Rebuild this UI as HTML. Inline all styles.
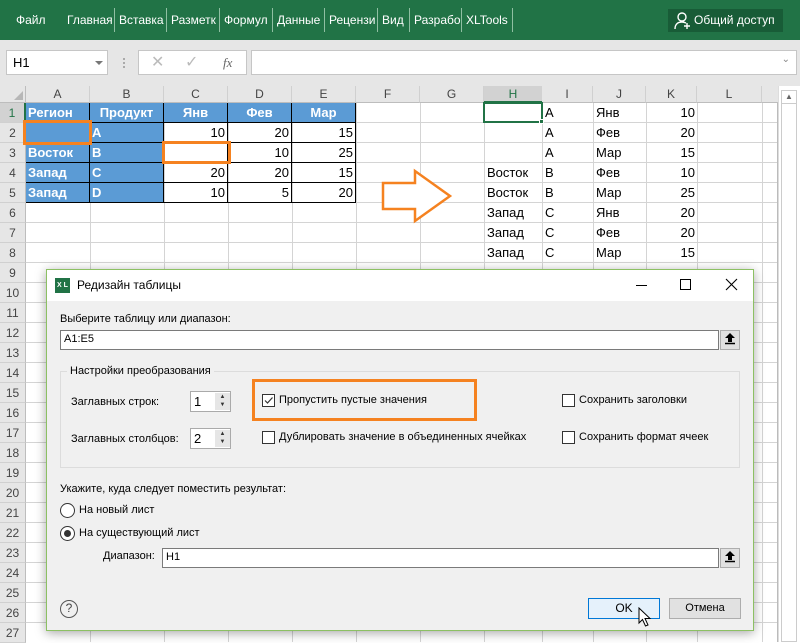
<!DOCTYPE html>
<html><head><meta charset="utf-8">
<style>
*{margin:0;padding:0;box-sizing:border-box}
body{width:800px;height:642px;overflow:hidden;position:relative;background:#fff;font-family:"Liberation Sans","DejaVu Sans",sans-serif}
.a{position:absolute}
.rib{left:0;top:0;width:800px;height:40px;background:#217346;color:#fff;font-size:12px}
.tab{top:13px}
.sep{top:8px;width:1px;height:24px;background:#8fbfa2}
.fb{left:0;top:40px;width:800px;height:46px;background:#e6e6e6}
.box{background:#fff;border:1px solid #c6c6c6}
.grid{left:26px;top:103px;width:751px;height:539px;background-image:repeating-linear-gradient(to bottom,transparent 0,transparent 19px,#d4d4d4 19px,#d4d4d4 20px)}
.vl{top:86px;width:1px;height:556px;background:#d4d4d4}
.hdr{top:86px;height:17px;background:#e6e6e6;border-bottom:1px solid #bdbdbd;font-size:12px;color:#444;text-align:center;line-height:17px}
.rh{left:0;width:26px;height:20px;background:#e6e6e6;border-right:1px solid #bdbdbd;border-bottom:1px solid #d0d0d0;font-size:12px;color:#444;text-align:center;line-height:20px}
.c{height:20px;font-size:13px;line-height:20px;padding:0 2px;white-space:nowrap}
.bl{background:#5b9bd5;color:#fff;font-weight:bold}
.bd{border-right:1px solid #000;border-bottom:1px solid #000}
.r{text-align:right}
.dlg{left:46px;top:269px;width:708px;height:362px;background:#f0f0f0;border:1px solid #8cc063;box-shadow:0 2px 10px rgba(0,0,0,.35);font-size:11px;color:#000}
.t{font-size:11px;white-space:nowrap}
.inp{background:#fff;border:1px solid #7a7a7a;font-size:11px;line-height:17px;padding-left:3px}
.ub{width:20px;height:20px;background:#e1e1e1;border:1px solid #adadad;text-align:center}
.cb{width:13px;height:13px;background:#fff;border:1px solid #333}
.rd{width:15px;height:15px;border-radius:50%;background:#fff;border:1px solid #333}
</style></head><body>
<div class="a rib">
<div class="a tab" style="left:16px">Файл</div>
<div class="a tab" style="left:67px">Главная</div><div class="a sep" style="left:114px"></div>
<div class="a tab" style="left:119px">Вставка</div><div class="a sep" style="left:166px"></div>
<div class="a tab" style="left:171px">Разметк</div><div class="a sep" style="left:219px"></div>
<div class="a tab" style="left:224px">Формул</div><div class="a sep" style="left:272px"></div>
<div class="a tab" style="left:277px">Данные</div><div class="a sep" style="left:324px"></div>
<div class="a tab" style="left:329px">Рецензи</div><div class="a sep" style="left:377px"></div>
<div class="a tab" style="left:382px">Вид</div><div class="a sep" style="left:409px"></div>
<div class="a tab" style="left:414px">Разрабо</div><div class="a sep" style="left:461px"></div>
<div class="a tab" style="left:466px">XLTools</div><div class="a sep" style="left:512px"></div>
<div class="a" style="left:668px;top:9px;width:115px;height:23px;background:#185c37"></div>
<svg class="a" style="left:674px;top:11px" width="18" height="20" viewBox="0 0 18 20"><circle cx="8" cy="6" r="4" fill="none" stroke="#fff" stroke-width="1.4"/><path d="M1 18c0-5 3-7 7-7 2 0 3 .5 4 1" fill="none" stroke="#fff" stroke-width="1.4"/><path d="M13 12v6M10 15h6" stroke="#fff" stroke-width="1.4"/></svg>
<div class="a" style="left:694px;top:13px;font-size:12px">Общий доступ</div>
</div>
<div class="a fb">
<div class="a box" style="left:6px;top:10px;width:102px;height:25px;font-size:13px;line-height:23px;padding-left:6px">H1<span class="a" style="left:88px;top:10px;border:4px solid transparent;border-top:4px solid #777"></span></div>
<div class="a" style="left:123px;top:18px;width:2px;height:2px;background:#aaa;box-shadow:0 4px #aaa,0 8px #aaa"></div>
<div class="a box" style="left:138px;top:10px;width:109px;height:25px;color:#bbb;font-size:16px;line-height:23px"><span class="a" style="left:12px">✕</span><span class="a" style="left:46px">✓</span><span class="a" style="left:84px;color:#666;font-family:'Liberation Serif',serif;font-style:italic;font-size:13px">fx</span></div>
<div class="a box" style="left:251px;top:10px;width:546px;height:25px"><span class="a" style="right:6px;top:3px;color:#888;font-size:10px">⌄</span></div>
</div>
<div class="a grid"></div>
<div class="a vl" style="left:90px"></div><div class="a vl" style="left:164px"></div><div class="a vl" style="left:228px"></div><div class="a vl" style="left:292px"></div><div class="a vl" style="left:356px"></div><div class="a vl" style="left:420px"></div><div class="a vl" style="left:484px"></div><div class="a vl" style="left:542px"></div><div class="a vl" style="left:593px"></div><div class="a vl" style="left:646px"></div><div class="a vl" style="left:697px"></div><div class="a vl" style="left:762px"></div><div class="a vl" style="left:777px;background:#bbb"></div>
<div class="a" style="left:778px;top:86px;width:22px;height:556px;background:#fff;border-left:1px solid #ddd"></div>
<div class="a" style="left:781px;top:90px;width:16px;height:14px;background:#fff;border:1px solid #ccc;font-size:8px;text-align:center;color:#666;line-height:12px">▲</div>
<div class="a" style="left:781px;top:104px;width:16px;height:538px;border:1px solid #ccc;border-top:none"></div>
<div class="a hdr" style="left:0;width:26px;border-right:1px solid #bdbdbd"><span class="a" style="right:2px;bottom:2px;border-left:9px solid transparent;border-bottom:9px solid #b7b7b7"></span></div>
<div class="a hdr" style="left:26px;width:64px;border-right:1px solid #d0d0d0">A</div>
<div class="a hdr" style="left:90px;width:74px;border-right:1px solid #d0d0d0">B</div>
<div class="a hdr" style="left:164px;width:64px;border-right:1px solid #d0d0d0">C</div>
<div class="a hdr" style="left:228px;width:64px;border-right:1px solid #d0d0d0">D</div>
<div class="a hdr" style="left:292px;width:64px;border-right:1px solid #d0d0d0">E</div>
<div class="a hdr" style="left:356px;width:64px;border-right:1px solid #d0d0d0">F</div>
<div class="a hdr" style="left:420px;width:64px;border-right:1px solid #d0d0d0">G</div>
<div class="a hdr" style="left:484px;width:58px;background:#d2d2d2;color:#217346;border-bottom:2px solid #217346">H</div>
<div class="a hdr" style="left:542px;width:51px;border-right:1px solid #d0d0d0">I</div>
<div class="a hdr" style="left:593px;width:53px;border-right:1px solid #d0d0d0">J</div>
<div class="a hdr" style="left:646px;width:51px;border-right:1px solid #d0d0d0">K</div>
<div class="a hdr" style="left:697px;width:65px;border-right:1px solid #d0d0d0">L</div>
<div class="a hdr" style="left:762px;width:16px"></div>
<div class="a rh" style="top:103px;color:#217346;border-right:2px solid #217346;background:#d2d2d2">1</div>
<div class="a rh" style="top:123px">2</div><div class="a rh" style="top:143px">3</div><div class="a rh" style="top:163px">4</div><div class="a rh" style="top:183px">5</div><div class="a rh" style="top:203px">6</div><div class="a rh" style="top:223px">7</div><div class="a rh" style="top:243px">8</div><div class="a rh" style="top:263px">9</div><div class="a rh" style="top:283px">10</div><div class="a rh" style="top:303px">11</div><div class="a rh" style="top:323px">12</div><div class="a rh" style="top:343px">13</div><div class="a rh" style="top:363px">14</div><div class="a rh" style="top:383px">15</div><div class="a rh" style="top:403px">16</div><div class="a rh" style="top:423px">17</div><div class="a rh" style="top:443px">18</div><div class="a rh" style="top:463px">19</div><div class="a rh" style="top:483px">20</div><div class="a rh" style="top:503px">21</div><div class="a rh" style="top:523px">22</div><div class="a rh" style="top:543px">23</div><div class="a rh" style="top:563px">24</div><div class="a rh" style="top:583px">25</div><div class="a rh" style="top:603px">26</div><div class="a rh" style="top:623px">27</div>
<div class="a c bl bd" style="left:26px;top:103px;width:64px">Регион</div>
<div class="a c bl bd" style="left:90px;top:103px;width:74px;text-align:center">Продукт</div>
<div class="a c bl bd" style="left:164px;top:103px;width:64px;text-align:center">Янв</div>
<div class="a c bl bd" style="left:228px;top:103px;width:64px;text-align:center">Фев</div>
<div class="a c bl bd" style="left:292px;top:103px;width:64px;text-align:center">Мар</div>
<div class="a c bl bd" style="left:26px;top:123px;width:64px"></div><div class="a c bl bd" style="left:90px;top:123px;width:74px">A</div>
<div class="a c bl bd" style="left:26px;top:143px;width:64px">Восток</div><div class="a c bl bd" style="left:90px;top:143px;width:74px">B</div>
<div class="a c bl bd" style="left:26px;top:163px;width:64px">Запад</div><div class="a c bl bd" style="left:90px;top:163px;width:74px">C</div>
<div class="a c bl bd" style="left:26px;top:183px;width:64px">Запад</div><div class="a c bl bd" style="left:90px;top:183px;width:74px">D</div>
<div class="a c bd r" style="left:164px;top:123px;width:64px">10</div><div class="a c bd r" style="left:228px;top:123px;width:64px">20</div><div class="a c bd r" style="left:292px;top:123px;width:64px">15</div>
<div class="a c bd r" style="left:164px;top:143px;width:64px"></div><div class="a c bd r" style="left:228px;top:143px;width:64px">10</div><div class="a c bd r" style="left:292px;top:143px;width:64px">25</div>
<div class="a c bd r" style="left:164px;top:163px;width:64px">20</div><div class="a c bd r" style="left:228px;top:163px;width:64px">20</div><div class="a c bd r" style="left:292px;top:163px;width:64px">15</div>
<div class="a c bd r" style="left:164px;top:183px;width:64px">10</div><div class="a c bd r" style="left:228px;top:183px;width:64px">5</div><div class="a c bd r" style="left:292px;top:183px;width:64px">20</div>
<div class="a" style="left:23px;top:120px;width:69px;height:25px;border:3px solid #f58220"></div>
<div class="a" style="left:162px;top:141px;width:69px;height:23px;border:3px solid #f58220"></div>
<svg class="a" style="left:380px;top:168px" width="75" height="58"><path d="M3 15H35V3L70 28L35 53V41H3Z" fill="#fff" stroke="#f58220" stroke-width="2.5"/></svg>
<div class="a" style="left:483px;top:102px;width:60px;height:21px;border:2px solid #217346"></div>
<div class="a" style="left:539px;top:119px;width:5px;height:5px;background:#217346;border:1px solid #fff"></div>
<div class="a c" style="left:543px;top:103px">A</div><div class="a c" style="left:594px;top:103px">Янв</div><div class="a c r" style="left:646px;top:103px;width:51px">10</div>
<div class="a c" style="left:543px;top:123px">A</div><div class="a c" style="left:594px;top:123px">Фев</div><div class="a c r" style="left:646px;top:123px;width:51px">20</div>
<div class="a c" style="left:543px;top:143px">A</div><div class="a c" style="left:594px;top:143px">Мар</div><div class="a c r" style="left:646px;top:143px;width:51px">15</div>
<div class="a c" style="left:485px;top:163px">Восток</div><div class="a c" style="left:543px;top:163px">B</div><div class="a c" style="left:594px;top:163px">Фев</div><div class="a c r" style="left:646px;top:163px;width:51px">10</div>
<div class="a c" style="left:485px;top:183px">Восток</div><div class="a c" style="left:543px;top:183px">B</div><div class="a c" style="left:594px;top:183px">Мар</div><div class="a c r" style="left:646px;top:183px;width:51px">25</div>
<div class="a c" style="left:485px;top:203px">Запад</div><div class="a c" style="left:543px;top:203px">C</div><div class="a c" style="left:594px;top:203px">Янв</div><div class="a c r" style="left:646px;top:203px;width:51px">20</div>
<div class="a c" style="left:485px;top:223px">Запад</div><div class="a c" style="left:543px;top:223px">C</div><div class="a c" style="left:594px;top:223px">Фев</div><div class="a c r" style="left:646px;top:223px;width:51px">20</div>
<div class="a c" style="left:485px;top:243px">Запад</div><div class="a c" style="left:543px;top:243px">C</div><div class="a c" style="left:594px;top:243px">Мар</div><div class="a c r" style="left:646px;top:243px;width:51px">15</div>
<div class="a dlg">
<div class="a" style="left:0;top:0;width:706px;height:31px;background:#fff"></div>
<div class="a" style="left:8px;top:8px;width:15px;height:15px;background:#217346;color:#fff;font-size:7px;line-height:15px;text-align:center;font-weight:bold">X L</div>
<div class="a t" style="left:30px;top:8px;font-size:12px">Редизайн таблицы</div>
<div class="a" style="left:589px;top:15px;width:11px;height:1px;background:#000"></div>
<div class="a" style="left:633px;top:9px;width:11px;height:11px;border:1px solid #000"></div>
<svg class="a" style="left:678px;top:8px" width="13" height="13"><path d="M1 1L12 12M12 1L1 12" stroke="#000" stroke-width="1.1"/></svg>
<div class="a t" style="left:13px;top:43px">Выберите таблицу или диапазон:</div>
<div class="a inp" style="left:13px;top:60px;width:659px;height:20px">A1:E5</div>
<div class="a ub" style="left:673px;top:60px"><svg width="12" height="14" viewBox="0 0 12 14"><path d="M6 2L1 7h3v4h4V7h3Z" fill="#000"/><path d="M1 12.5h10" stroke="#000" stroke-width="1.5"/></svg></div>
<div class="a" style="left:13px;top:101px;width:680px;height:97px;border:1px solid #dcdcdc"></div>
<div class="a t" style="left:20px;top:95px;background:#f0f0f0;padding:0 3px">Настройки преобразования</div>
<div class="a t" style="left:24px;top:126px">Заглавных строк:</div>
<div class="a" style="left:143px;top:121px;width:41px;height:21px;background:#fff;border:1px solid #aaa;font-size:13px;line-height:19px;padding-left:3px">1<span class="a" style="left:24px;top:1px;width:15px;height:17px;background:#e6e6e6;font-size:6px;line-height:8px;text-align:center;color:#333">▲<br>▼</span></div>
<div class="a t" style="left:24px;top:163px">Заглавных столбцов:</div>
<div class="a" style="left:143px;top:158px;width:41px;height:21px;background:#fff;border:1px solid #aaa;font-size:13px;line-height:19px;padding-left:3px">2<span class="a" style="left:24px;top:1px;width:15px;height:17px;background:#e6e6e6;font-size:6px;line-height:8px;text-align:center;color:#333">▲<br>▼</span></div>
<div class="a" style="left:205px;top:109px;width:225px;height:42px;border:3px solid #f58220"></div>
<div class="a cb" style="left:215px;top:124px"><svg class="a" style="left:0;top:0" width="11" height="11"><path d="M2 5.5L4.5 8L9.5 2.5" fill="none" stroke="#333" stroke-width="1.2"/></svg></div>
<div class="a t" style="left:232px;top:124px">Пропустить пустые значения</div>
<div class="a cb" style="left:215px;top:161px"></div>
<div class="a t" style="left:232px;top:161px">Дублировать значение в объединенных ячейках</div>
<div class="a cb" style="left:515px;top:124px"></div>
<div class="a t" style="left:532px;top:124px">Сохранить заголовки</div>
<div class="a cb" style="left:515px;top:161px"></div>
<div class="a t" style="left:532px;top:161px">Сохранить формат ячеек</div>
<div class="a t" style="left:13px;top:213px">Укажите, куда следует поместить результат:</div>
<div class="a rd" style="left:13px;top:233px"></div>
<div class="a t" style="left:32px;top:234px">На новый лист</div>
<div class="a rd" style="left:13px;top:256px"><span class="a" style="left:3px;top:3px;width:7px;height:7px;border-radius:50%;background:#333"></span></div>
<div class="a t" style="left:32px;top:257px">На существующий лист</div>
<div class="a t" style="left:56px;top:280px">Диапазон:</div>
<div class="a inp" style="left:115px;top:278px;width:557px;height:20px">H1</div>
<div class="a ub" style="left:673px;top:278px"><svg width="12" height="14" viewBox="0 0 12 14"><path d="M6 2L1 7h3v4h4V7h3Z" fill="#000"/><path d="M1 12.5h10" stroke="#000" stroke-width="1.5"/></svg></div>
<div class="a" style="left:13px;top:330px;width:18px;height:18px;border-radius:50%;border:1.5px solid #555;font-size:12px;text-align:center;line-height:15px;color:#444">?</div>
<div class="a" style="left:541px;top:328px;width:72px;height:21px;background:#e5f1fb;border:1px solid #0078d7;font-size:12px;text-align:center;line-height:19px">OK</div>
<div class="a" style="left:622px;top:328px;width:72px;height:21px;background:#e1e1e1;border:1px solid #adadad;font-size:11px;text-align:center;line-height:19px">Отмена</div>
<svg class="a" style="left:591px;top:337px" width="14" height="22"><path d="M1 1V16L4.5 12.5L7.5 19L10 18L7 11.5H12Z" fill="#fff" stroke="#000" stroke-width="1"/></svg>
</div>
</body></html>
